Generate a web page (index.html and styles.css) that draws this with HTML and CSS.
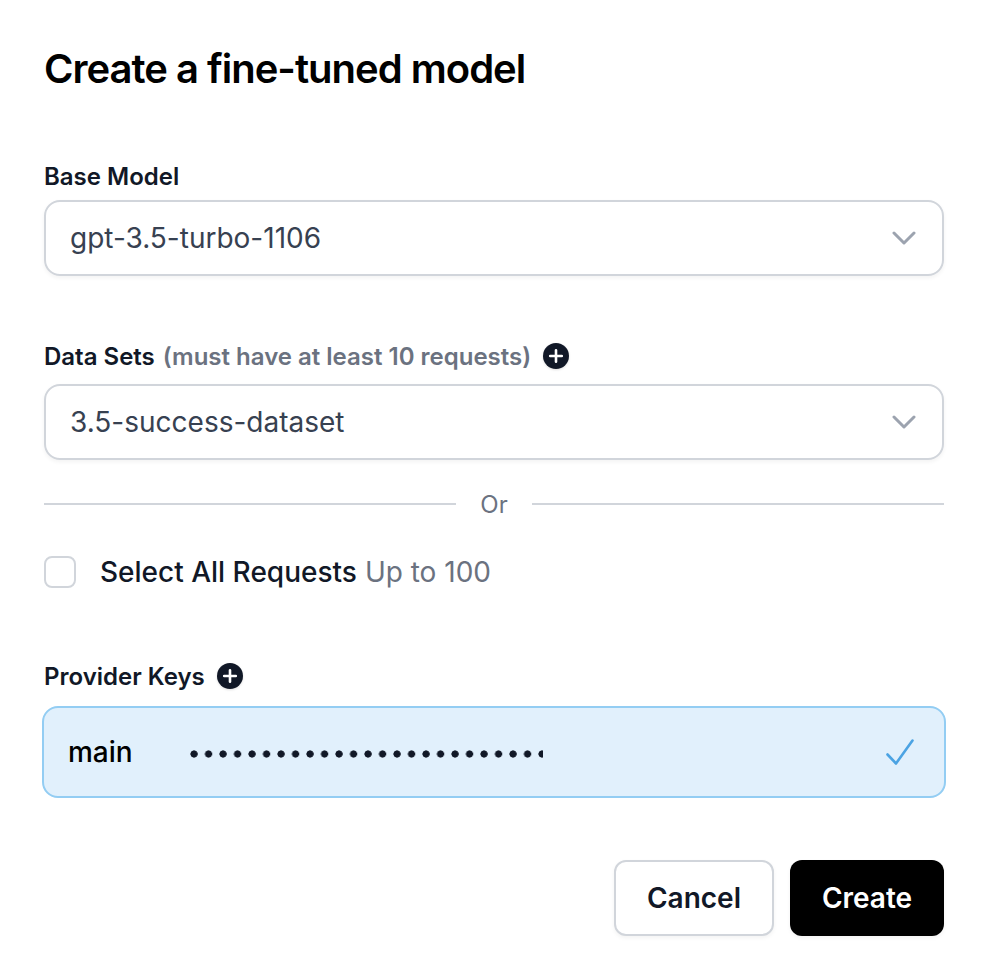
FILE: index.html
```html
<!DOCTYPE html>
<html lang="en">
<head>
<meta charset="utf-8">
<title>Create a fine-tuned model</title>
<link rel="stylesheet" href="styles.css">
</head>
<body>
<main class="dialog">
  <h1 class="title"><span class="fit t-title">Create a fine-tuned model</span></h1>
  <section class="field">
    <div class="label"><span class="t-base">Base Model</span></div>
    <div class="select"><span class="t-gpt">gpt-3.5-turbo-1106</span>
      <svg class="chevron" viewBox="0 0 24 14"><path d="M2 2l10 10L22 2"/></svg></div>
  </section>
  <section class="field field-data">
    <div class="label"><span class="t-sets">Data Sets</span><span class="hint">(must have at least 10 requests)</span>
      <svg class="plus" viewBox="0 0 26 26"><circle cx="13" cy="13" r="13"/><path d="M13 7.2v11.6M7.2 13h11.6"/></svg></div>
    <div class="select"><span class="t-set">3.5-success-dataset</span>
      <svg class="chevron" viewBox="0 0 24 14"><path d="M2 2l10 10L22 2"/></svg></div>
  </section>
  <div class="divider"><span>Or</span></div>
  <div class="check-row"><span class="checkbox"></span><span class="check-label">Select All Requests</span><span class="check-note">Up to 100</span></div>
  <section class="field field-keys">
    <div class="label"><span class="t-keys">Provider Keys</span>
      <svg class="plus" viewBox="0 0 26 26"><circle cx="13" cy="13" r="13"/><path d="M13 7.2v11.6M7.2 13h11.6"/></svg></div>
    <div class="key"><span class="key-name">main</span><span class="dots"></span>
      <svg class="tick" viewBox="0 0 28 26"><path d="M1.5 15.5L10 24.5L26.5 1.5"/></svg></div>
  </section>
  <div class="actions"><button class="btn cancel">Cancel</button><button class="btn create">Create</button></div>
</main>
</body>
</html>
```
FILE: styles.css
```css
* { box-sizing: border-box; }
body { margin: 0; background: #fff; color: #111827; font-family: Inter, "Liberation Sans", sans-serif; }
.dialog { width: 984px; height: 980px; padding: 44px 40px 0 44px; overflow: hidden; }
.title { margin: 0; height: 50px; line-height: 50px; font-size: 40px; font-weight: 600; letter-spacing: -1px; color: #000; white-space: nowrap; }
.field { margin-top: 66px; }
.label { display: flex; align-items: center; height: 32px; margin-bottom: 8px; font-size: 24px; font-weight: 600; white-space: nowrap; }
.hint { margin-left: 8px; color: #6b7280; }
.plus { width: 26px; height: 26px; margin-left: 12px; fill: #111827; filter: drop-shadow(0 1px 1px rgba(0,0,0,.12)); }
.plus path { stroke: #fff; stroke-width: 2.6; stroke-linecap: round; }
.select { display: flex; align-items: center; justify-content: space-between; height: 76px; padding: 0 26px 0 24px; border: 2px solid #d1d5db; border-radius: 16px; font-size: 28px; color: #374151; box-shadow: 0 2px 4px rgba(0,0,0,.05); }
.chevron { width: 24px; height: 14px; fill: none; stroke: #9ca3af; stroke-width: 3; stroke-linecap: round; stroke-linejoin: round; }
.field-data { margin-top: 64px; }
.field-data .label { margin-bottom: 12px; }
.divider { display: flex; align-items: center; gap: 24px; height: 36px; margin-top: 26px; font-size: 24px; color: #6b7280; }
.divider::before, .divider::after { content: ""; flex: 1; height: 2px; background: #d1d5db; }
.check-row { display: flex; align-items: center; height: 40px; margin-top: 30px; font-size: 28px; }
.checkbox { width: 32px; height: 32px; margin-right: 24px; border: 2px solid #d1d5db; border-radius: 8px; }
.check-label { font-weight: 500; margin-right: 8px; }
.check-note { color: #6b7280; }
.field-keys { margin-top: 68px; }
.field-keys .label { margin-bottom: 14px; }
.key { display: flex; align-items: center; height: 92px; margin: 0 -2px; padding: 0 30px 0 24px; border: 2px solid #93cdf3; border-radius: 16px; background: #e1f0fc; font-size: 28px; font-weight: 500; color: #000; }
.key-name { width: 122px; }
.dots { width: 353px; height: 8px; margin-top: 4px; background: radial-gradient(circle at 4px 4px, #111827 3.3px, transparent 3.9px) 0 0 / 14.5px 8px; }
.tick { width: 28px; height: 26px; margin-left: auto; fill: none; stroke: #4ba3e3; stroke-width: 2.6; stroke-linecap: round; stroke-linejoin: round; }
.actions { display: flex; justify-content: flex-end; gap: 16px; margin-top: 62px; }
.btn { height: 76px; padding: 0; border-radius: 12px; font: 600 28px Inter, "Liberation Sans", sans-serif; }
.cancel { width: 160px; border: 2px solid #d1d5db; background: #fff; color: #111827; box-shadow: 0 2px 4px rgba(0,0,0,.05); }
.create { width: 154px; border: 0; background: #000; color: #fff; box-shadow: 0 2px 4px rgba(0,0,0,.05); }
```
